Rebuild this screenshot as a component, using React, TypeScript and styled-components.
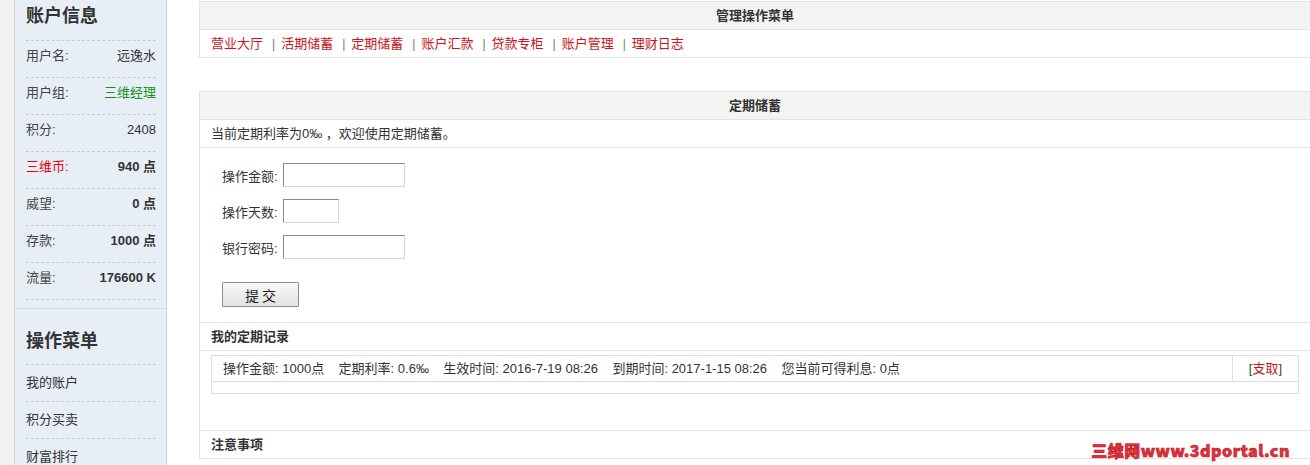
import styled, { createGlobalStyle } from 'styled-components'

const GlobalStyle = createGlobalStyle`
    html, body {
        margin: 0;
        padding: 0;
        background: #fff;
        overflow: hidden;
    }
    body {
        font-family: "Liberation Sans", "Noto Sans CJK SC", sans-serif;
        font-size: 13px;
        color: #333;
    }
`

const accountRows = [
    { label: '用户名:', value: '远逸水' },
    { label: '用户组:', value: '三维经理', tone: 'green' },
    { label: '积分:', value: '2408' },
    { label: '三维币:', value: '940 点', tone: 'red', bold: true },
    { label: '威望:', value: '0 点', bold: true },
    { label: '存款:', value: '1000 点', bold: true },
    { label: '流量:', value: '176600 K', bold: true },
]

const menuItems = ['我的账户', '积分买卖', '财富排行']

const navLinks = ['营业大厅', '活期储蓄', '定期储蓄', '账户汇款', '贷款专柜', '账户管理', '理财日志']

const App = () => {
    return (
        <>
            <GlobalStyle />
            <Page>
                <Gutter />
                <Sidebar>
                    <InfoBlock>
                        <SideTitle>账户信息</SideTitle>
                        {accountRows.map((row) => (
                            <InfoRow key={row.label}>
                                <InfoLabel $red={row.tone === 'red'}>{row.label}</InfoLabel>
                                <InfoValue $green={row.tone === 'green'} $bold={row.bold}>{row.value}</InfoValue>
                            </InfoRow>
                        ))}
                    </InfoBlock>
                    <MenuTitle>操作菜单</MenuTitle>
                    {menuItems.map((item) => (
                        <MenuItem key={item}>{item}</MenuItem>
                    ))}
                </Sidebar>
                <Main>
                    <Panel>
                        <PanelHead>管理操作菜单</PanelHead>
                        <NavRow>
                            {navLinks.map((link, i) => (
                                <span key={link}>
                                    {i > 0 && <Sep>|</Sep>}
                                    <NavLink>{link}</NavLink>
                                </span>
                            ))}
                        </NavRow>
                    </Panel>

                    <Panel $gap>
                        <PanelHead>定期储蓄</PanelHead>
                        <TextRow>当前定期利率为0‰ ，欢迎使用定期储蓄。</TextRow>
                        <FormArea>
                            <FieldRow>
                                <FieldLabel>操作金额:</FieldLabel>
                                <Field type="text" $w={122} />
                            </FieldRow>
                            <FieldRow>
                                <FieldLabel>操作天数:</FieldLabel>
                                <Field type="text" $w={56} />
                            </FieldRow>
                            <FieldRow>
                                <FieldLabel>银行密码:</FieldLabel>
                                <Field type="password" $w={122} />
                            </FieldRow>
                            <SubmitButton type="button">提 交</SubmitButton>
                        </FormArea>
                        <SectionHead>我的定期记录</SectionHead>
                        <RecordArea>
                            <RecordTable>
                                <RecordRow>
                                    <RecordText>
                                        操作金额: 1000点&nbsp;&nbsp;&nbsp;&nbsp;定期利率: 0.6‰&nbsp;&nbsp;&nbsp;&nbsp;生效时间: 2016-7-19 08:26&nbsp;&nbsp;&nbsp;&nbsp;到期时间: 2017-1-15 08:26&nbsp;&nbsp;&nbsp;&nbsp;您当前可得利息: 0点
                                    </RecordText>
                                    <RecordAction>
                                        [<ActionLink>支取</ActionLink>]
                                    </RecordAction>
                                </RecordRow>
                                <RecordFoot />
                            </RecordTable>
                        </RecordArea>
                        <SectionHead>注意事项</SectionHead>
                    </Panel>
                </Main>
                <Watermark>三维网www.3dportal.cn</Watermark>
            </Page>
        </>
    )
}

export default App

const Page = styled.div`
    position: relative;
    display: flex;
    width: 1312px;
    height: 465px;
    overflow: hidden;
`

const Gutter = styled.div`
    width: 14px;
    flex-shrink: 0;
    background: #f2f2f2;
`

const Sidebar = styled.div`
    width: 151px;
    flex-shrink: 0;
    background: #e7eef6;
    border-left: 1px solid #d3d9df;
    border-right: 1px solid #cdd4db;
`

const InfoBlock = styled.div`
    padding: 0 10px 8px 11px;
    border-bottom: 1px solid #d3d9df;
`

const SideTitle = styled.div`
    padding: 4px 0 12px;
    line-height: 24px;
    font-size: 18px;
    font-weight: bold;
    color: #333;
    border-bottom: 1px dashed #c5ccd3;
`

const MenuTitle = styled(SideTitle)`
    margin: 0 10px 0 11px;
    padding: 20px 0 11px;
`

const InfoRow = styled.div`
    display: flex;
    justify-content: space-between;
    padding-bottom: 6px;
    line-height: 30px;
    border-bottom: 1px dashed #c5ccd3;
`

const InfoLabel = styled.span<{ $red?: boolean }>`
    color: ${(p) => (p.$red ? '#e00' : '#444')};
`

const InfoValue = styled.span<{ $green?: boolean; $bold?: boolean }>`
    color: ${(p) => (p.$green ? '#17931a' : '#333')};
    font-weight: ${(p) => (p.$bold ? 'bold' : 'normal')};
`

const MenuItem = styled.div`
    margin: 0 10px 0 11px;
    line-height: 36px;
    color: #333;
    border-bottom: 1px dashed #c5ccd3;
`

const Main = styled.div`
    width: 1112px;
    margin-left: 32px;
    padding-top: 1px;
    flex-shrink: 0;
`

const Panel = styled.div<{ $gap?: boolean }>`
    margin-top: ${(p) => (p.$gap ? '33px' : '0')};
    border: 1px solid #e3e3e3;
    border-bottom: none;
`

const PanelHead = styled.div`
    height: 27px;
    line-height: 27px;
    text-align: center;
    font-weight: bold;
    font-size: 13px;
    color: #333;
    background: #f3f3f3;
    border-bottom: 1px solid #e3e3e3;
`

const NavRow = styled.div`
    height: 27px;
    line-height: 27px;
    padding-left: 11px;
    border-bottom: 1px solid #e3e3e3;
`

const NavLink = styled.a`
    color: #c8161d;
    cursor: pointer;
`

const Sep = styled.span`
    color: #777;
    margin: 0 6px 0 9px;
    font-size: 12px;
`

const TextRow = styled.div`
    height: 27px;
    line-height: 27px;
    padding-left: 11px;
    color: #333;
    border-bottom: 1px solid #e3e3e3;
`

const FormArea = styled.div`
    display: flex;
    flex-direction: column;
    align-items: flex-start;
    gap: 12px;
    padding: 15px 0 15px 22px;
    border-bottom: 1px solid #e3e3e3;
`

const FieldRow = styled.div`
    display: flex;
    align-items: center;
    gap: 2px;
`

const FieldLabel = styled.label`
    width: 59px;
    color: #333;
`

const Field = styled.input<{ $w: number }>`
    width: ${(p) => p.$w}px;
    height: 24px;
    box-sizing: border-box;
    border: 1px solid;
    border-color: #8a8a8a #d6d6d6 #d6d6d6 #8a8a8a;
    background: #fff;
    padding: 0 3px;
    font-size: 13px;
    outline: none;
`

const SubmitButton = styled.button`
    margin-top: 11px;
    width: 77px;
    height: 25px;
    font-family: "Noto Sans CJK SC", sans-serif;
    font-size: 14px;
    color: #222;
    background: linear-gradient(#f8f8f8, #e2e2e2);
    border: 1px solid #8e8e8e;
    border-radius: 1px;
    cursor: pointer;
    padding: 0;
`

const SectionHead = styled.div`
    height: 27px;
    line-height: 27px;
    padding-left: 11px;
    font-weight: bold;
    color: #333;
    border-bottom: 1px solid #e3e3e3;
`

const RecordArea = styled.div`
    height: 80px;
    padding: 4px 11px 0;
    border-bottom: 1px solid #e3e3e3;
    box-sizing: border-box;
`

const RecordTable = styled.div`
    border: 1px solid #dedede;
`

const RecordRow = styled.div`
    display: flex;
    height: 25px;
    line-height: 25px;
    border-bottom: 1px solid #dedede;
`

const RecordText = styled.div`
    flex: 1;
    padding-left: 11px;
    color: #333;
    white-space: nowrap;
`

const RecordAction = styled.div`
    width: 65px;
    text-align: center;
    color: #444;
    border-left: 1px solid #dedede;
`

const ActionLink = styled.a`
    color: #c8161d;
    cursor: pointer;
`

const RecordFoot = styled.div`
    height: 11px;
`

const Watermark = styled.div`
    position: absolute;
    right: 22px;
    bottom: 6px;
    font-family: "Noto Sans CJK SC", "DejaVu Sans", sans-serif;
    font-size: 16px;
    font-weight: 900;
    line-height: 18px;
    color: #e8303a;
    -webkit-text-stroke: 0.6px #b01820;
    text-shadow: 1px 0 #fff, -1px 0 #fff, 0 1px #fff, 0 -1px #fff;
    letter-spacing: 0.5px;
`
